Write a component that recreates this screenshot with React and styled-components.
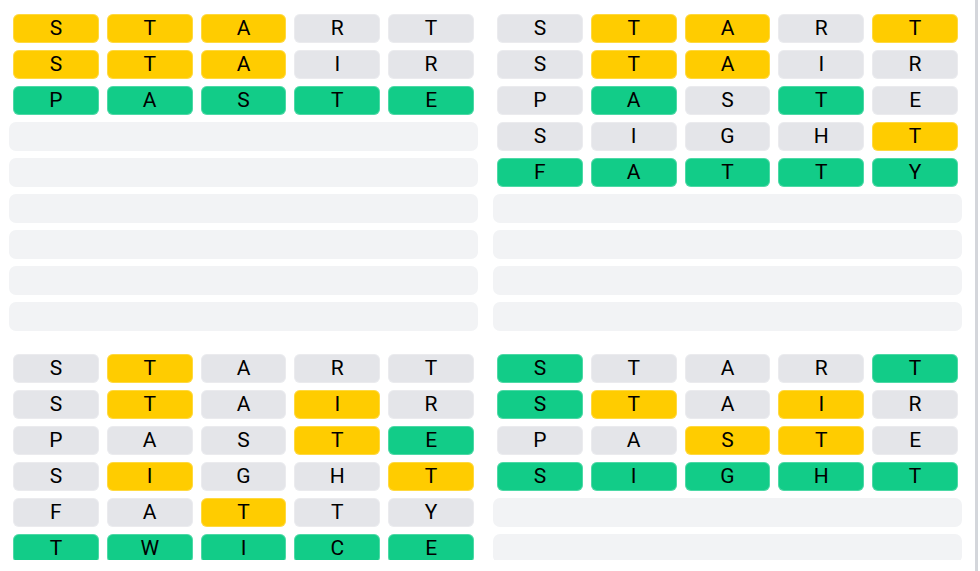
import styled, { createGlobalStyle } from "styled-components";

const GlobalStyle = createGlobalStyle`
  body {
    margin: 0;
    background: #ffffff;
    font-family: Roboto, "Liberation Sans", sans-serif;
    overflow: hidden;
  }
`;

const COLORS = {
  g: "#12cc88",
  y: "#ffcc00",
  x: "#e4e5e9",
};

const boards = [
  {
    guesses: [
      ["START", "yyyxx"],
      ["STAIR", "yyyxx"],
      ["PASTE", "ggggg"],
    ],
  },
  {
    guesses: [
      ["START", "xyyxy"],
      ["STAIR", "xyyxx"],
      ["PASTE", "xgxgx"],
      ["SIGHT", "xxxxy"],
      ["FATTY", "ggggg"],
    ],
  },
  {
    guesses: [
      ["START", "xyxxx"],
      ["STAIR", "xyxyx"],
      ["PASTE", "xxxyg"],
      ["SIGHT", "xyxxy"],
      ["FATTY", "xxyxx"],
      ["TWICE", "ggggg"],
    ],
  },
  {
    guesses: [
      ["START", "gxxxg"],
      ["STAIR", "gyxyx"],
      ["PASTE", "xxyyx"],
      ["SIGHT", "ggggg"],
    ],
  },
];

const Page = styled.div`
  display: flex;
  width: 980px;
  height: 571px;
`;

const Main = styled.main`
  flex: 1;
  height: 560px;
  overflow: hidden;
  padding: 14px 13px 0 9px;
  box-sizing: border-box;
`;

const ScrollTrack = styled.div`
  width: 3px;
  margin-right: 2px;
  background: #d4d6db;
`;

const Grid = styled.div`
  display: grid;
  grid-template-columns: 469px 469px;
  column-gap: 15px;
  row-gap: 23px;
`;

const Quadrant = styled.div`
  display: flex;
  flex-direction: column;
  gap: 7px;
`;

const Row = styled.div`
  display: grid;
  grid-template-columns: repeat(5, 1fr);
  height: 29px;
`;

const EmptyRow = styled.div`
  height: 29px;
  border-radius: 7px;
  background: #f2f3f5;
`;

const Tile = styled.div`
  margin: 0 4px;
  display: flex;
  align-items: center;
  justify-content: center;
  border-radius: 6px;
  background: ${(p) => COLORS[p.$state]};
  box-shadow: inset 0 0 0 1px rgba(255, 255, 255, 0.25);
  color: #000;
  font-size: 21px;
  line-height: 1;
`;

function Board({ guesses }) {
  const empties = 9 - guesses.length;
  return (
    <Quadrant>
      {guesses.map(([word, states], i) => (
        <Row key={i}>
          {word.split("").map((ch, j) => (
            <Tile key={j} $state={states[j]}>
              {ch}
            </Tile>
          ))}
        </Row>
      ))}
      {Array.from({ length: empties }).map((_, i) => (
        <EmptyRow key={"e" + i} />
      ))}
    </Quadrant>
  );
}

export default function App() {
  return (
    <Page>
      <GlobalStyle />
      <Main>
        <Grid>
          {boards.map((b, i) => (
            <Board key={i} guesses={b.guesses} />
          ))}
        </Grid>
      </Main>
      <ScrollTrack />
    </Page>
  );
}
